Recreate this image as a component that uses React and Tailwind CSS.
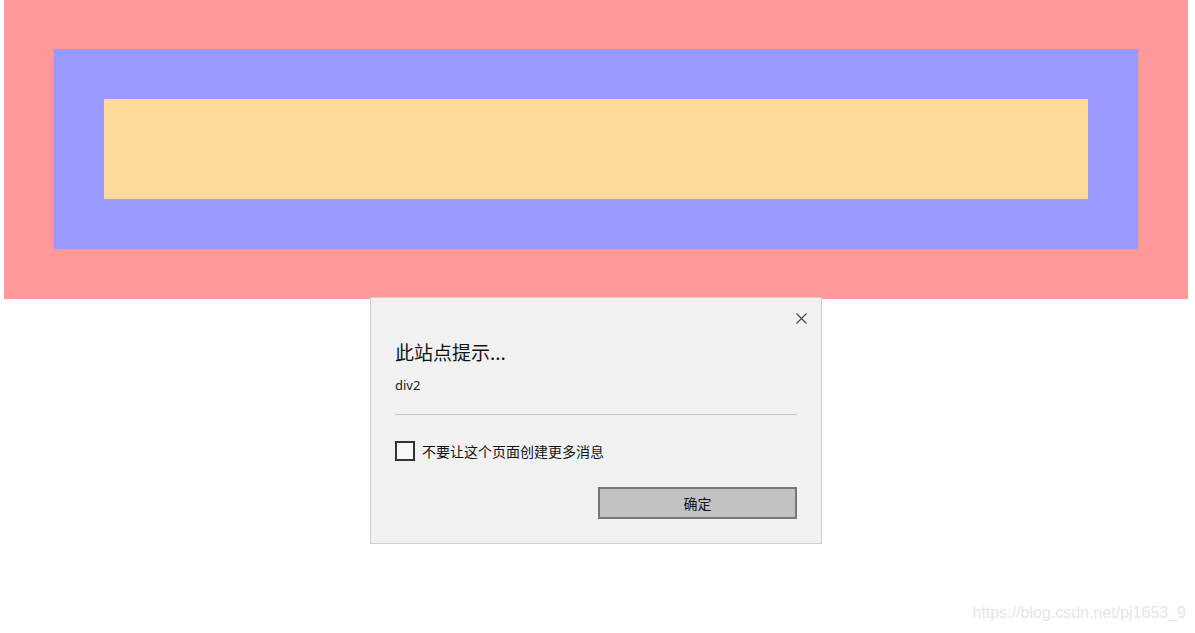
export default function App() {
  return (
    <div className="relative w-[1195px] h-[633px] bg-white overflow-hidden" style={{ fontFamily: '"Noto Sans", "Noto Sans CJK SC", sans-serif' }}>
      <div className="ml-[4px] w-[1184px] bg-[#ff9999] pt-[49px] pb-[50px] px-[50px]">
        <div className="bg-[#9999ff] p-[50px]">
          <div className="bg-[#ffd999] h-[100px]" />
        </div>
      </div>

      <div className="absolute left-[370px] top-[297px] w-[452px] h-[247px] bg-[#f1f1f1] border border-[#cfcfcf] flex flex-col">
        <div className="flex justify-end pt-[15px] pr-[14px]">
          <svg width="11" height="11" viewBox="0 0 11 11" className="text-[#444]">
            <path d="M0.5 0.5 L10.5 10.5 M10.5 0.5 L0.5 10.5" stroke="currentColor" strokeWidth="1.1" fill="none" />
          </svg>
        </div>
        <div className="px-[24px]">
          <div className="mt-[15px] text-[19px] leading-[26px] text-[#111]" style={{ fontFamily: '"Noto Sans CJK SC", sans-serif' }}>此站点提示...</div>
          <div className="mt-[11px] text-[13px] leading-[18px] text-[#222]">div2</div>
          <div className="mt-[20px] h-px bg-[#c6c6c6]" />
          <div className="mt-[26px] flex items-center gap-[7px]">
            <div className="w-[20px] h-[20px] border-2 border-[#333] bg-[#f7f7f7]" />
            <span className="text-[14px] leading-[18px] text-[#111] -mt-[1px]" style={{ fontFamily: '"Noto Sans CJK SC", sans-serif' }}>不要让这个页面创建更多消息</span>
          </div>
          <div className="mt-[26px] flex justify-end">
            <div className="w-[199px] h-[32px] bg-[#c2c2c2] border-2 border-[#777] flex items-center justify-center text-[14px] text-[#111]" style={{ fontFamily: '"Noto Sans CJK SC", sans-serif' }}>确定</div>
          </div>
        </div>
      </div>

      <div className="absolute right-[9px] top-[603px] text-[16px] leading-[20px] text-[#e6e6e6]" style={{ fontFamily: '"Liberation Sans", Arial, sans-serif' }}>https://blog.csdn.net/pj1653_9</div>
    </div>
  );
}
